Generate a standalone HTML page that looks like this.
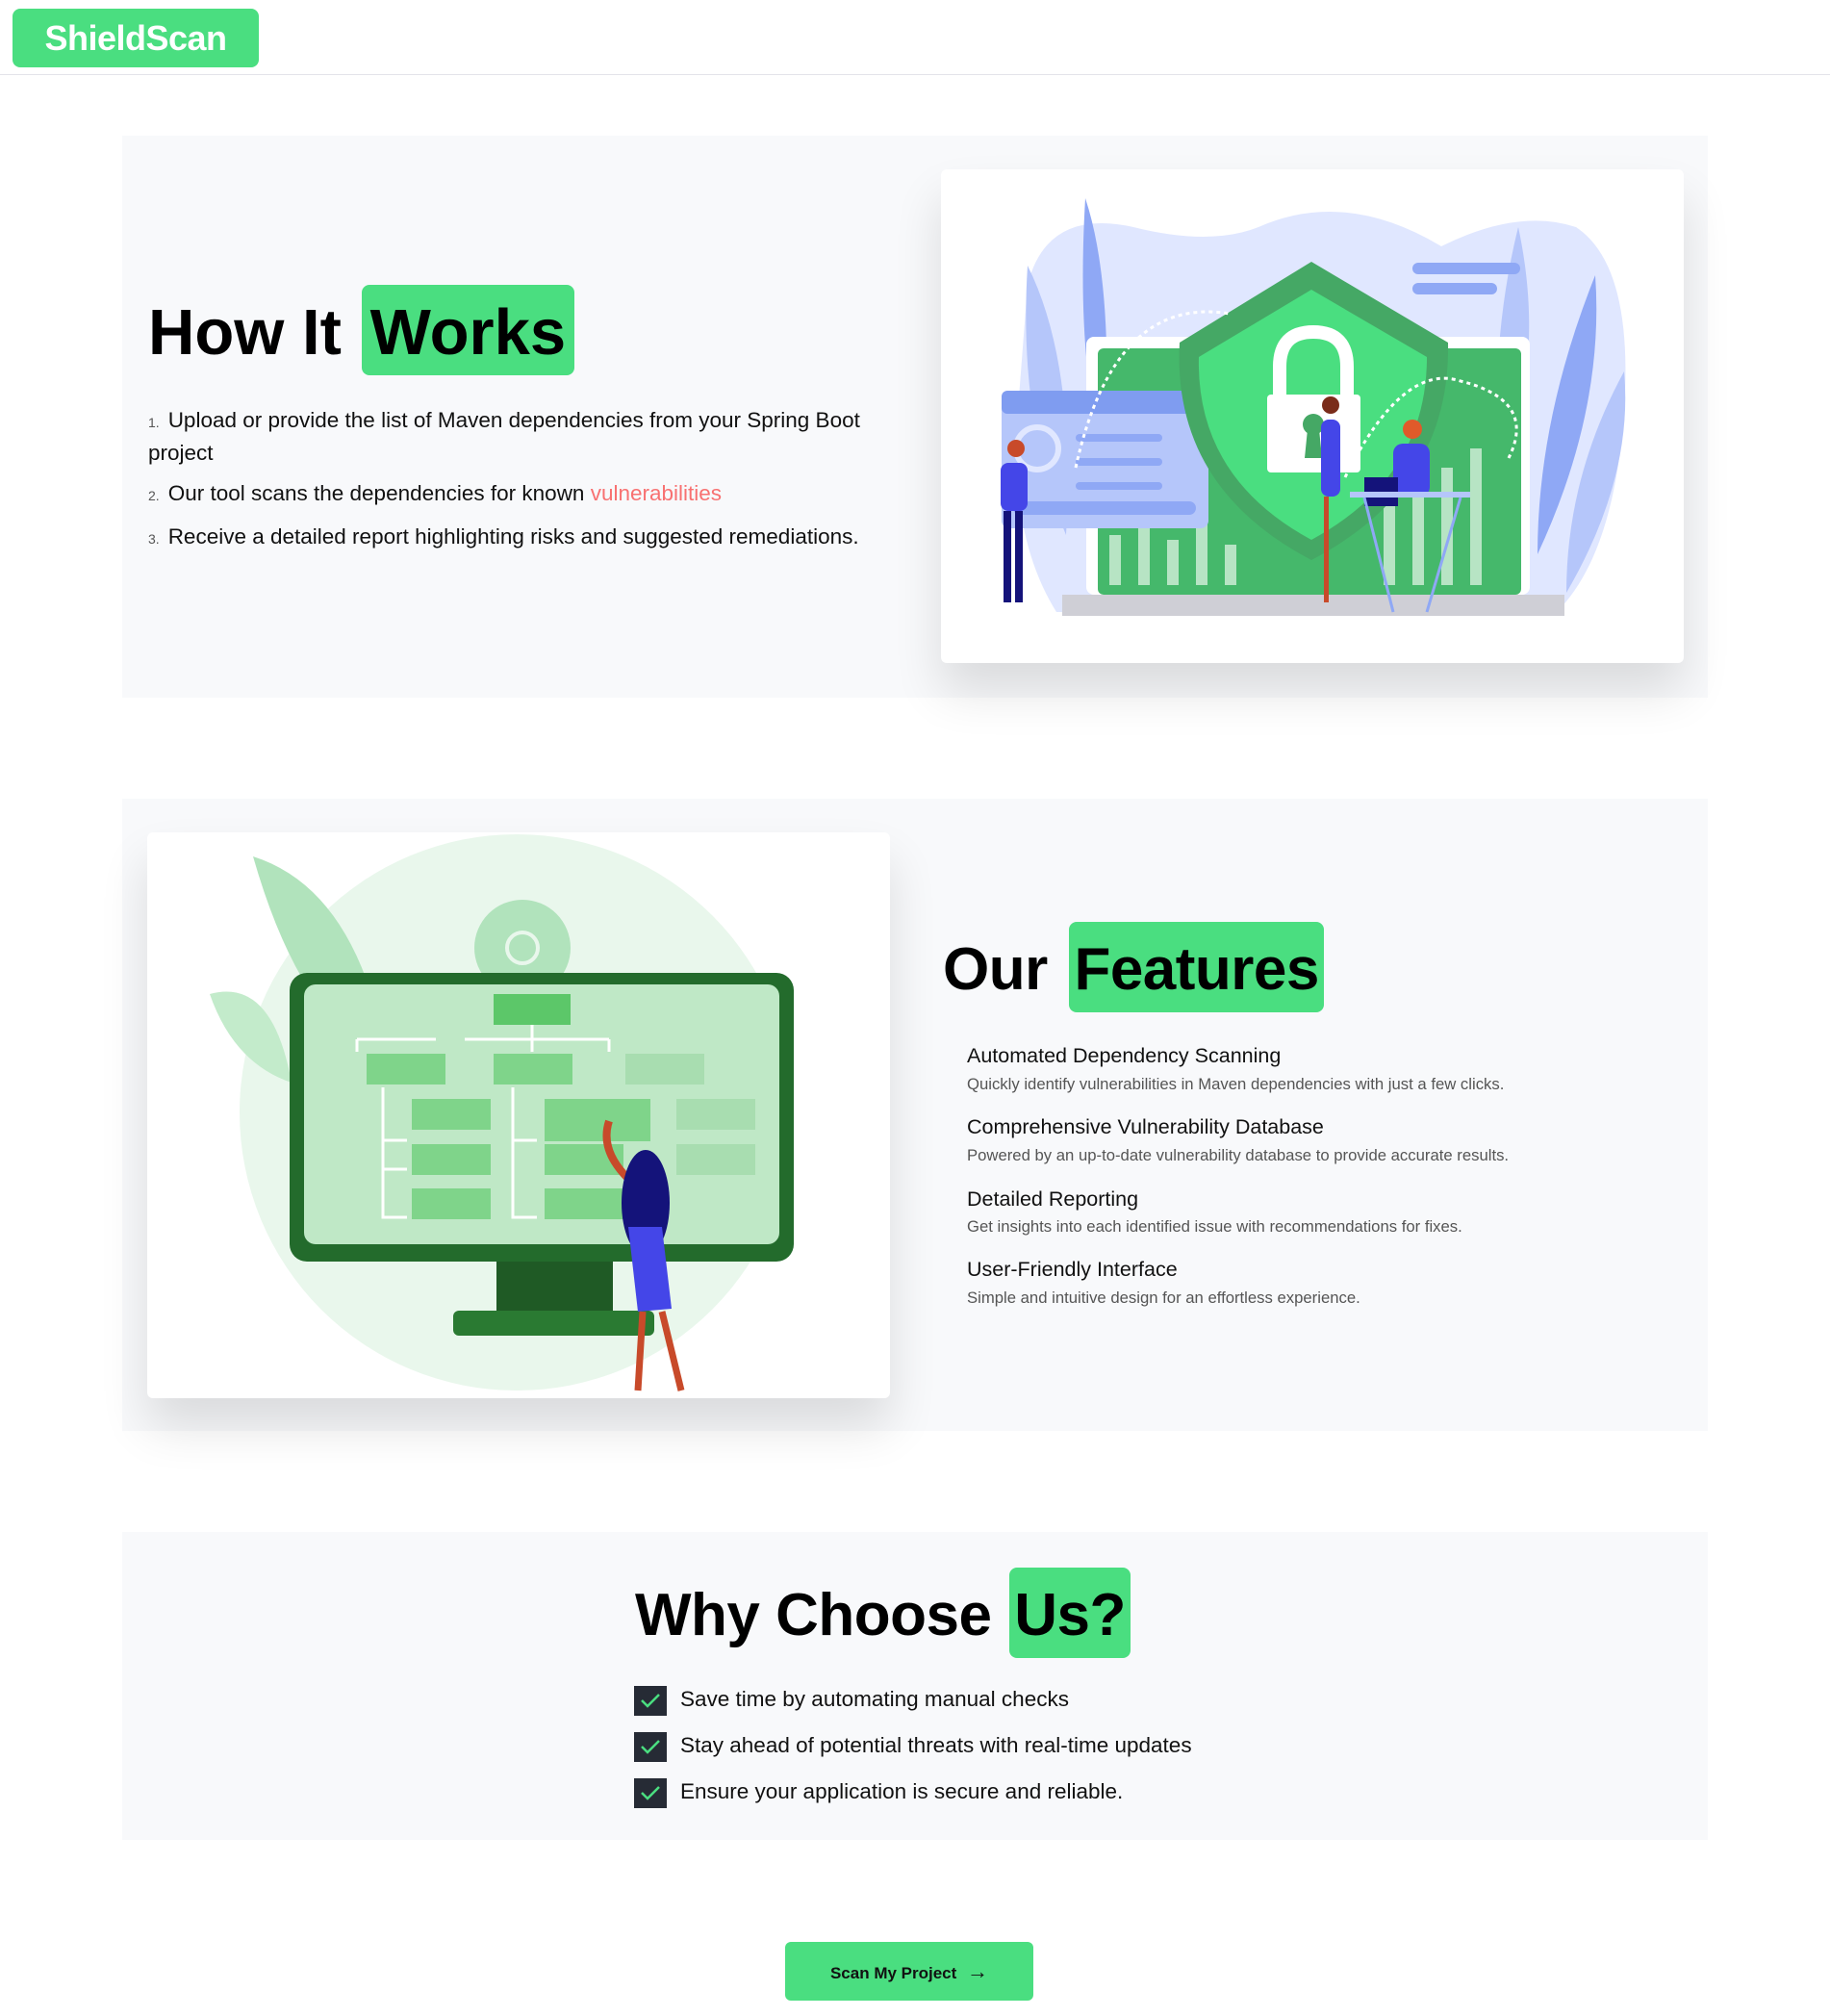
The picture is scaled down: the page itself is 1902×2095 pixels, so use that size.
<!DOCTYPE html>
<html><head><meta charset="utf-8">
<style>
*{margin:0;padding:0;box-sizing:border-box}
body{width:1902px;height:2095px;background:#fff;font-family:"Liberation Sans",sans-serif;color:#111;position:relative;overflow:hidden}
.abs{position:absolute}
.hdr{left:0;top:0;width:1902px;height:78px;border-bottom:1px solid #e4e4ea}
.logo{left:13px;top:9px;width:256px;height:61px;background:#4ade80;border-radius:8px;color:#fff;font-weight:bold;font-size:36px;line-height:61px;text-align:center;letter-spacing:-0.5px}
.sec{background:#f8f9fb}
.h{font-weight:bold;font-size:67px;letter-spacing:0px;color:#000;white-space:nowrap;line-height:100px;height:94px}
.h span{display:inline-block;background:#4ade80;border-radius:8px;padding:0 9px;height:94px;vertical-align:top;line-height:100px}
.h2{font-size:62px;letter-spacing:-0.5px}
.h2 span{padding:0 5px}
.card{background:#fff;border-radius:6px;box-shadow:0 30px 50px rgba(0,0,0,0.12)}
.li{font-size:22.5px;color:#111;white-space:nowrap}
.li small{font-size:14px;color:#555;margin-right:9px}
.ft{font-size:21.5px;color:#111;white-space:nowrap}
.fd{font-size:16.7px;color:#555;white-space:nowrap}
.chk{width:34px;height:31px;background:#262b35}
.ct{font-size:22.5px;color:#111;white-space:nowrap}
.btn{left:816px;top:2018px;width:258px;height:61px;background:#4ade80;border-radius:6px;font-weight:bold;font-size:17px;color:#111;text-align:center;line-height:61px}
</style></head><body>
<div class="abs hdr"></div>
<div class="abs logo">ShieldScan</div>

<!-- Section 1 -->
<div class="abs sec" style="left:127px;top:141px;width:1648px;height:584px"></div>
<div class="abs h" style="left:154px;top:296px">How It <span style="margin-left:2px">Works</span></div>
<div class="abs li" style="left:154px;top:421px;line-height:31px;white-space:normal;width:770px"><small>1.</small>Upload or provide the list of Maven dependencies from your Spring Boot project</div>
<div class="abs li" style="left:154px;top:497px;line-height:31px"><small>2.</small>Our tool scans the dependencies for known <span style="color:#f87171">vulnerabilities</span></div>
<div class="abs li" style="left:154px;top:542px;line-height:31px"><small>3.</small>Receive a detailed report highlighting risks and suggested remediations.</div>

<div class="abs card" style="left:978px;top:176px;width:772px;height:513px">
<svg width="772" height="513" viewBox="0 0 772 513">
<path d="M90 120 Q110 40 200 60 Q280 80 330 60 Q420 20 520 80 Q600 40 660 60 Q720 100 710 250 Q700 400 640 460 L120 460 Q70 380 80 250 Z" fill="#e0e7ff"/>
<path d="M150 30 Q180 120 170 300 Q140 200 150 30Z" fill="#8fa8f5"/>
<path d="M90 100 Q140 200 130 380 Q80 260 90 100Z" fill="#b5c6fa"/>
<path d="M600 60 Q630 200 580 320 Q570 180 600 60Z" fill="#b5c6fa"/>
<path d="M680 110 Q690 250 620 400 Q620 260 680 110Z" fill="#8fa8f5"/>
<path d="M710 210 Q720 320 650 440 Q650 320 710 210Z" fill="#b5c6fa"/>
<rect x="490" y="97" width="112" height="12" rx="6" fill="#8fa8f5"/><rect x="490" y="118" width="88" height="12" rx="6" fill="#8fa8f5"/>
<rect x="151" y="174" width="461" height="268" rx="8" fill="#fff"/>
<rect x="163" y="186" width="440" height="256" rx="6" fill="#45b86b"/>
<g fill="#b7e4c4"><rect x="175" y="380" width="12" height="52"/><rect x="205" y="370" width="12" height="62"/><rect x="235" y="385" width="12" height="47"/><rect x="265" y="365" width="12" height="67"/><rect x="295" y="390" width="12" height="42"/><rect x="460" y="350" width="12" height="82"/><rect x="490" y="330" width="12" height="102"/><rect x="520" y="310" width="12" height="122"/><rect x="550" y="290" width="12" height="142"/></g>
<rect x="126" y="442" width="522" height="22" fill="#cfcfd6"/>
<rect x="63" y="230" width="215" height="143" rx="8" fill="#b5c6fa"/>
<rect x="63" y="230" width="215" height="24" rx="6" fill="#7f9cf0"/>
<circle cx="100" cy="290" r="22" fill="none" stroke="#e0e7ff" stroke-width="6"/>
<rect x="140" y="275" width="90" height="8" rx="4" fill="#8fa8f5"/><rect x="140" y="300" width="90" height="8" rx="4" fill="#8fa8f5"/><rect x="140" y="325" width="90" height="8" rx="4" fill="#8fa8f5"/>
<rect x="75" y="345" width="190" height="14" rx="7" fill="#8fa8f5"/>
<path d="M385 96 L527 180 Q530 330 385 406 Q240 330 248 180 Z" fill="#45a865"/>
<path d="M385 125 L505 195 Q505 320 385 385 Q265 320 268 195 Z" fill="#4ade80"/>
<path d="M352 240 V205 Q352 169 387 169 Q422 169 422 205 V240" fill="none" stroke="#fff" stroke-width="14"/>
<rect x="339" y="234" width="97" height="81" rx="4" fill="#fff"/>
<circle cx="387" cy="265" r="11" fill="#45a865"/><path d="M381 270 L393 270 L396 300 L378 300Z" fill="#45a865"/>
<path d="M140 310 Q180 130 300 150 M420 320 Q480 200 540 220 Q620 240 590 300" fill="none" stroke="#fff" stroke-width="3" stroke-dasharray="4 4"/>
<g><rect x="62" y="305" width="28" height="50" rx="8" fill="#4446e8"/><rect x="65" y="355" width="8" height="95" fill="#14137a"/><rect x="77" y="355" width="8" height="95" fill="#14137a"/><circle cx="78" cy="290" r="9" fill="#c84a2a"/></g>
<g><rect x="395" y="260" width="20" height="80" rx="8" fill="#4446e8"/><circle cx="405" cy="245" r="9" fill="#7a2c1a"/><rect x="398" y="340" width="5" height="110" fill="#c84a2a"/></g>
<g><rect x="470" y="285" width="38" height="55" rx="10" fill="#4446e8"/><circle cx="490" cy="270" r="10" fill="#e05a2a"/><rect x="440" y="320" width="35" height="30" fill="#14137a"/><rect x="425" y="335" width="125" height="6" fill="#b5c6fa"/><path d="M440 341 L470 460 M540 341 L505 460" stroke="#8fa8f5" stroke-width="3"/></g>
</svg>
</div>

<!-- Section 2 -->
<div class="abs sec" style="left:127px;top:830px;width:1648px;height:657px"></div>
<div class="abs card" style="left:153px;top:865px;width:772px;height:588px">
<svg width="772" height="588" viewBox="0 0 772 588">
<ellipse cx="384" cy="291" rx="288" ry="289" fill="#e9f7ec"/>
<path d="M110 25 Q220 60 250 240 Q160 200 110 25Z" fill="#b1e3bc"/>
<path d="M65 168 Q130 150 150 260 Q90 240 65 168Z" fill="#c3ebcb"/>
<circle cx="390" cy="120" r="50" fill="#b1e3bc"/><circle cx="390" cy="120" r="16" fill="none" stroke="#e9f7ec" stroke-width="4"/>
<circle cx="480" cy="190" r="40" fill="#b1e3bc"/>
<rect x="148" y="146" width="524" height="300" rx="18" fill="#236b2c"/>
<rect x="163" y="158" width="494" height="270" rx="12" fill="#bfe8c6"/>
<rect x="360" y="168" width="80" height="32" fill="#5cc769"/>
<path d="M218 215 H 300 M 330 215 H 480 M 218 215 V 228 M 400 200 V 228 M 480 215 V 228 M 245 265 V 400 H 270 M 245 320 H 270 M 245 350 H 270 M 380 265 V 400 H 405 M 380 320 H 405" stroke="#fff" stroke-width="3" fill="none"/>
<g fill="#7fd48a"><rect x="228" y="230" width="82" height="32"/><rect x="360" y="230" width="82" height="32"/><rect x="275" y="277" width="82" height="32"/><rect x="275" y="324" width="82" height="32"/><rect x="275" y="370" width="82" height="32"/><rect x="413" y="277" width="110" height="44"/><rect x="413" y="324" width="82" height="32"/><rect x="413" y="370" width="82" height="32"/></g>
<g fill="#a8ddb0"><rect x="497" y="230" width="82" height="32"/><rect x="550" y="277" width="82" height="32"/><rect x="550" y="324" width="82" height="32"/></g>
<rect x="363" y="446" width="121" height="51" fill="#1f5a25"/>
<rect x="318" y="497" width="209" height="26" rx="6" fill="#2a7a32"/>
<path d="M480 300 Q470 330 500 360" stroke="#c84a2a" stroke-width="8" fill="none"/>
<ellipse cx="518" cy="385" rx="25" ry="55" fill="#14137a"/>
<path d="M500 410 L535 410 L545 495 L510 498Z" fill="#4446e8"/>
<path d="M515 498 L510 580 M535 498 L555 580" stroke="#c84a2a" stroke-width="7"/>
</svg>
</div>
<div class="abs h h2" style="left:980px;top:958px">Our <span style="margin-left:6px">Features</span></div>
<div class="abs ft" style="left:1005px;top:1085px">Automated Dependency Scanning</div>
<div class="abs fd" style="left:1005px;top:1117px">Quickly identify vulnerabilities in Maven dependencies with just a few clicks.</div>
<div class="abs ft" style="left:1005px;top:1159px">Comprehensive Vulnerability Database</div>
<div class="abs fd" style="left:1005px;top:1191px">Powered by an up-to-date vulnerability database to provide accurate results.</div>
<div class="abs ft" style="left:1005px;top:1234px">Detailed Reporting</div>
<div class="abs fd" style="left:1005px;top:1265px">Get insights into each identified issue with recommendations for fixes.</div>
<div class="abs ft" style="left:1005px;top:1307px">User-Friendly Interface</div>
<div class="abs fd" style="left:1005px;top:1339px">Simple and intuitive design for an effortless experience.</div>

<!-- Section 3 -->
<div class="abs sec" style="left:127px;top:1592px;width:1648px;height:320px"></div>
<div class="abs h h2" style="left:660px;top:1629px">Why Choose <span style="margin-left:2px">Us?</span></div>
<div class="abs chk" style="left:659px;top:1752px"><svg width="34" height="31"><path d="M8 15 L14 21 L26 9" stroke="#4ade80" stroke-width="2.5" fill="none"/></svg></div>
<div class="abs ct" style="left:707px;top:1753px">Save time by automating manual checks</div>
<div class="abs chk" style="left:659px;top:1800px"><svg width="34" height="31"><path d="M8 15 L14 21 L26 9" stroke="#4ade80" stroke-width="2.5" fill="none"/></svg></div>
<div class="abs ct" style="left:707px;top:1801px">Stay ahead of potential threats with real-time updates</div>
<div class="abs chk" style="left:659px;top:1848px"><svg width="34" height="31"><path d="M8 15 L14 21 L26 9" stroke="#4ade80" stroke-width="2.5" fill="none"/></svg></div>
<div class="abs ct" style="left:707px;top:1849px">Ensure your application is secure and reliable.</div>

<div class="abs btn">Scan My Project <span style="font-size:22px;margin-left:6px">→</span></div>
</body></html>
